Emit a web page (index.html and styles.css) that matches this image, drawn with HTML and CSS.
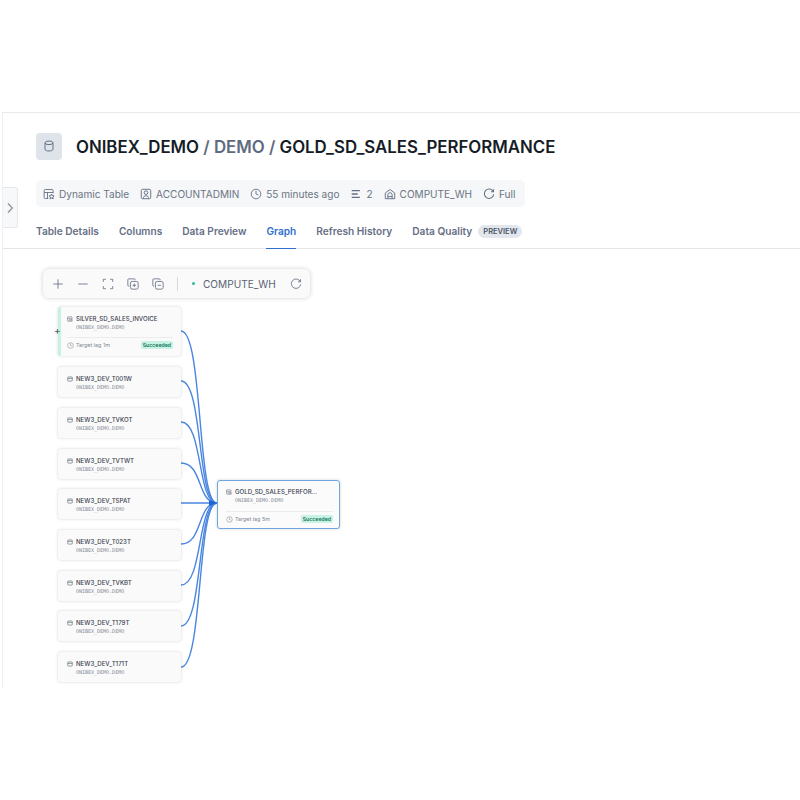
FILE: index.html
```html
<!DOCTYPE html>
<html lang="en">
<head>
<meta charset="utf-8">
<title>GOLD_SD_SALES_PERFORMANCE</title>
<link rel="stylesheet" href="styles.css">
</head>
<body>
<svg class="defs" width="0" height="0" aria-hidden="true">
  <symbol id="i-dyn" viewBox="0 0 16 16"><path d="M7 14H3a1.500 1.500 0 0 1-1.500-1.500v-9A1.500 1.500 0 0 1 3 2h9a1.500 1.500 0 0 1 1.500 1.500V7M1.500 6h12M6 6v8" fill="none" stroke="currentColor" stroke-width="1.200"/><path d="M11.500 8l1 2.200 2.300.3-1.700 1.600.5 2.400-2.100-1.200-2.100 1.200.5-2.400-1.700-1.600 2.300-.3z" fill="none" stroke="currentColor" stroke-width="1.300" stroke-linejoin="round"/></symbol>
  <symbol id="i-tbl" viewBox="0 0 16 16"><rect x="2" y="2.500" width="12" height="11" rx="1.500" fill="none" stroke="currentColor" stroke-width="1.500"/><path d="M2 6.500h12" fill="none" stroke="currentColor" stroke-width="1.500"/></symbol>
  <symbol id="i-clock" viewBox="0 0 16 16"><circle cx="8" cy="8" r="6.400" fill="none" stroke="currentColor" stroke-width="1.200"/><path d="M8 4.200V8l2.800 1.200" fill="none" stroke="currentColor" stroke-width="1.200" stroke-linecap="round"/></symbol>
</svg>
<main class="frame">
  <button class="expand" aria-label="Expand">
    <svg width="8" height="12" viewBox="0 0 8 12"><path d="M2 1.500 6.300 6 2 10.500" fill="none" stroke="#8a94a3" stroke-width="1.300"/></svg>
  </button>
  <header class="head">
    <div class="db-badge">
      <svg width="12" height="12" viewBox="0 0 12 12"><ellipse cx="6" cy="2.800" rx="4" ry="1.800" fill="none" stroke="#667085" stroke-width="1"/><path d="M2 2.800v6.400c0 1 1.800 1.800 4 1.800s4-.8 4-1.800V2.800" fill="none" stroke="#667085" stroke-width="1"/></svg>
    </div>
    <h1 class="title">ONIBEX_DEMO <span class="sep">/ DEMO /</span> GOLD_SD_SALES_PERFORMANCE</h1>
  </header>
  <div class="meta">
    <span class="meta-item"><svg class="mi"><use href="#i-dyn"/></svg>Dynamic Table</span>
    <span class="meta-item"><svg class="mi" viewBox="0 0 14 14"><rect x="1.500" y="1.500" width="11" height="11" rx="1.500" fill="none" stroke="currentColor" stroke-width="1.100"/><circle cx="7" cy="5.400" r="2.100" fill="none" stroke="currentColor" stroke-width="1.100"/><path d="M3.800 12.500c0-2.300 1.400-3.500 3.200-3.500s3.200 1.200 3.200 3.500" fill="none" stroke="currentColor" stroke-width="1.100"/></svg>ACCOUNTADMIN</span>
    <span class="meta-item"><svg class="mi"><use href="#i-clock"/></svg>55 minutes ago</span>
    <span class="meta-item"><svg class="mi" viewBox="0 0 14 14"><path d="M2 3h9.500M2 7h7M2 11h9.500" fill="none" stroke="currentColor" stroke-width="1.500"/></svg>2</span>
    <span class="meta-item"><svg class="mi" viewBox="0 0 14 14"><path d="M1.500 12.500V5.800L7 1.800l5.500 4v6.700zM4.500 12.500V8a2.500 2.500 0 0 1 5 0v4.500M4.500 10h5" fill="none" stroke="currentColor" stroke-width="1.100"/></svg>COMPUTE_WH</span>
    <span class="meta-item"><svg class="mi" viewBox="0 0 14 14"><path d="M12 4.200A5.500 5.500 0 1 0 12.500 7.500M12.300 1.500v3h-3" fill="none" stroke="currentColor" stroke-width="1.200"/></svg>Full</span>
  </div>
  <nav class="tabs">
    <a class="tab">Table Details</a>
    <a class="tab">Columns</a>
    <a class="tab">Data Preview</a>
    <a class="tab active">Graph</a>
    <a class="tab">Refresh History</a>
    <a class="tab">Data Quality<span class="pill">PREVIEW</span></a>
  </nav>
  <section class="graph">
    <svg class="edges" width="360" height="440" viewBox="0 0 360 440">
      <g fill="none" stroke="#4a86e0" stroke-width="1.400">
        <path d="M146 82C168 82 162 254 182 254"/>
        <path d="M146 132C168 132 162 254 182 254"/>
        <path d="M146 173C168 173 162 254 182 254"/>
        <path d="M146 214C168 214 162 254 182 254"/>
        <path d="M146 254H182"/>
        <path d="M146 295C168 295 162 254 182 254"/>
        <path d="M146 336C168 336 162 254 182 254"/>
        <path d="M146 377C168 377 162 254 182 254"/>
        <path d="M146 418C168 418 162 254 182 254"/>
      </g>
      <path d="M174 251l8 3-8 3z" fill="#1f64d2"/>
    </svg>
    <div class="toolbar">
      <svg class="tb" viewBox="0 0 14 14"><path d="M7 1.500v11M1.500 7h11"/></svg>
      <svg class="tb" viewBox="0 0 14 14"><path d="M1.500 7h11"/></svg>
      <svg class="tb" viewBox="0 0 14 14"><path d="M1.500 4.500V1.500h3M9.500 1.500h3v3M12.500 9.500v3h-3M4.500 12.500h-3v-3"/></svg>
      <svg class="tb" viewBox="0 0 14 14"><path d="M9.500 2.500V2a1 1 0 0 0-1-1H2a1 1 0 0 0-1 1v6.500a1 1 0 0 0 1 1h.5"/><rect x="4" y="4" width="9" height="9" rx="2"/><path d="M8.500 6.500v4M6.500 8.500h4"/></svg>
      <svg class="tb" viewBox="0 0 14 14"><path d="M9.500 2.500V2a1 1 0 0 0-1-1H2a1 1 0 0 0-1 1v6.500a1 1 0 0 0 1 1h.5"/><rect x="4" y="4" width="9" height="9" rx="2"/><path d="M6.500 8.500h4"/></svg>
      <span class="tb-div"></span>
      <span class="dot"></span>
      <span class="wh">COMPUTE_WH</span>
      <svg class="tb tb-last" viewBox="0 0 14 14"><path d="M12 4.200A5.500 5.500 0 1 0 12.500 7.500M12.300 1.500v3h-3"/></svg>
    </div>
    <article class="node node-big node-silver">
      <div class="node-main"><div class="node-name"><svg class="ni"><use href="#i-dyn"/></svg>SILVER_SD_SALES_INVOICE</div><div class="node-sub">ONIBEX_DEMO.DEMO</div></div>
      <div class="node-foot"><span class="lag"><svg class="ci"><use href="#i-clock"/></svg>Target lag 1m</span><span class="ok">Succeeded</span></div>
      <span class="plus">+</span>
    </article>
    <article class="node n2"><div class="node-name"><svg class="ni"><use href="#i-tbl"/></svg>NEW3_DEV_T001W</div><div class="node-sub">ONIBEX_DEMO.DEMO</div></article>
    <article class="node n3"><div class="node-name"><svg class="ni"><use href="#i-tbl"/></svg>NEW3_DEV_TVKOT</div><div class="node-sub">ONIBEX_DEMO.DEMO</div></article>
    <article class="node n4"><div class="node-name"><svg class="ni"><use href="#i-tbl"/></svg>NEW3_DEV_TVTWT</div><div class="node-sub">ONIBEX_DEMO.DEMO</div></article>
    <article class="node n5"><div class="node-name"><svg class="ni"><use href="#i-tbl"/></svg>NEW3_DEV_TSPAT</div><div class="node-sub">ONIBEX_DEMO.DEMO</div></article>
    <article class="node n6"><div class="node-name"><svg class="ni"><use href="#i-tbl"/></svg>NEW3_DEV_T023T</div><div class="node-sub">ONIBEX_DEMO.DEMO</div></article>
    <article class="node n7"><div class="node-name"><svg class="ni"><use href="#i-tbl"/></svg>NEW3_DEV_TVKBT</div><div class="node-sub">ONIBEX_DEMO.DEMO</div></article>
    <article class="node n8"><div class="node-name"><svg class="ni"><use href="#i-tbl"/></svg>NEW3_DEV_T179T</div><div class="node-sub">ONIBEX_DEMO.DEMO</div></article>
    <article class="node n9"><div class="node-name"><svg class="ni"><use href="#i-tbl"/></svg>NEW3_DEV_T171T</div><div class="node-sub">ONIBEX_DEMO.DEMO</div></article>
    <article class="node node-big node-gold">
      <div class="node-main"><div class="node-name"><svg class="ni"><use href="#i-dyn"/></svg>GOLD_SD_SALES_PERFOR...</div><div class="node-sub">ONIBEX_DEMO.DEMO</div></div>
      <div class="node-foot"><span class="lag"><svg class="ci"><use href="#i-clock"/></svg>Target lag 5m</span><span class="ok">Succeeded</span></div>
    </article>
  </section>
</main>
</body>
</html>
```
FILE: styles.css
```css
* { box-sizing: border-box; }
html, body { margin: 0; padding: 0; background: #fff; }
body { font-family: Inter, "Liberation Sans", sans-serif; width: 800px; height: 800px; overflow: hidden; }
.defs { position: absolute; }
.frame {
  position: relative;
  margin: 112px 0 0 2px;
  height: 576px;
  border-top: 1px solid #e7e9ec;
  border-left: 1px solid #eff0f2;
  padding-top: 19px;
  overflow: hidden;
}
.expand {
  position: absolute; left: -1px; top: 74px;
  width: 16px; height: 41px;
  padding: 0;
  display: flex; align-items: center; justify-content: center;
  background: #f7f8f9;
  border: 1px solid #e5e7ea; border-left: 0;
  border-radius: 0 3px 3px 0;
}
.head { display: flex; align-items: center; gap: 14px; margin-left: 33px; height: 28px; }
.db-badge {
  width: 26px; height: 27px; border-radius: 4px;
  background: #dfe4ea;
  display: flex; align-items: center; justify-content: center;
}
.title { margin: 1px 0 0; font-size: 16.830px; font-weight: 600; letter-spacing: 0; color: #161c26; white-space: nowrap; }
.sep { color: #5f6b80; }
.meta {
  display: inline-flex; align-items: center; gap: 11px;
  margin: 20px 0 0 33px; height: 27px; padding: 0 10px 0 7px;
  background: #f6f7f8; border-radius: 5px;
  font-size: 10.050px; color: #6b7585;
}
.meta-item { display: inline-flex; align-items: center; gap: 4px; white-space: nowrap; }
.mi { width: 12px; height: 12px; color: #667085; flex: none; }
.tabs {
  display: flex; align-items: stretch; gap: 20px;
  margin-top: 12px; padding-left: 33px; height: 30px;
  border-bottom: 1px solid #e3e5e8;
}
.tab { display: flex; align-items: center; font-size: 10.150px; font-weight: 600; color: #667085; margin-bottom: -1px; padding-bottom: 6px; border-bottom: 1px solid transparent; }
.tab.active { color: #2f6fce; border-bottom-color: #2f6fce; }
.pill {
  margin: 1px 0 0 6px; padding: 0 5px; height: 13px; line-height: 13px;
  border-radius: 7px; background: #e3e6ec;
  font-size: 7.500px; font-weight: 600; color: #4a5568;
}
.graph { position: relative; height: 440px; }
.edges { position: absolute; left: 32px; top: 0; }
.toolbar {
  position: absolute; left: 40px; top: 20px;
  display: flex; align-items: center;
  width: 267px; height: 29px; padding: 0 8px 0 9px;
  background: #fafafa; border-radius: 6px;
  box-shadow: 0 0 4px rgba(30, 40, 60, .22);
}
.tb { width: 12px; height: 12px; flex: none; margin-right: 13px; fill: none; stroke: #667085; stroke-width: 1; }
.tb-last { margin-right: 0; }
.tb-div { flex: none; width: 1px; height: 14px; background: #d5d8dd; margin-right: 14px; }
.dot { flex: none; width: 3px; height: 3px; border-radius: 50%; background: #2fb89a; margin-right: 8px; }
.wh { flex: none; font-size: 10.100px; color: #5a6474; margin-right: 14px; white-space: nowrap; }
.node {
  position: absolute; left: 55px; width: 123px; height: 30px;
  background: #fafafa; border-radius: 3px;
  box-shadow: 0 0 3px rgba(30, 40, 60, .22);
  padding: 7px 0 0 9px;
}
.n2 { top: 118px; } .n3 { top: 159px; } .n4 { top: 200px; } .n5 { top: 240px; }
.n6 { top: 281px; } .n7 { top: 322px; } .n8 { top: 362px; } .n9 { top: 403px; }
.node-name { display: flex; align-items: center; gap: 3px; font-size: 6.100px; font-weight: 500; color: #3a4250; line-height: 9px; white-space: nowrap; }
.ni { width: 6px; height: 6px; color: #4d5665; flex: none; }
.node-sub { margin: 1px 0 0 9px; font-family: "DejaVu Sans Mono", monospace; font-size: 5px; line-height: 6px; color: #858d99; }
.node-big { height: 49px; padding: 0; }
.node-main { padding: 7px 0 0 9px; height: 30px; }
.node-foot { display: flex; align-items: center; justify-content: space-between; margin: 0 8px; height: 15px; border-top: 1px solid #ececee; }
.lag { display: flex; align-items: center; gap: 2px; font-size: 5.400px; color: #7f8794; }
.ci { width: 7px; height: 7px; color: #7f8794; }
.ok { background: #c6f3e3; color: #14725a; font-size: 5.200px; font-weight: 600; height: 8px; line-height: 8px; padding: 0 2px; border-radius: 2px; }
.node-silver { top: 58px; border-left: 3px solid #c5f3e3; }
.node-silver .node-main { padding-left: 6px; }
.node-silver .node-foot { margin-left: 6px; }
.plus { position: absolute; left: -7px; top: 18px; font-size: 10px; line-height: 10px; color: #4d5665; }
.node-gold { left: 214px; top: 231px; border: 1px solid #6fa7dc; background: #fbfbfb; }
.node-gold .node-main { padding: 6px 0 0 8px; }
.node-gold .node-foot { margin-right: 6px; }
```
